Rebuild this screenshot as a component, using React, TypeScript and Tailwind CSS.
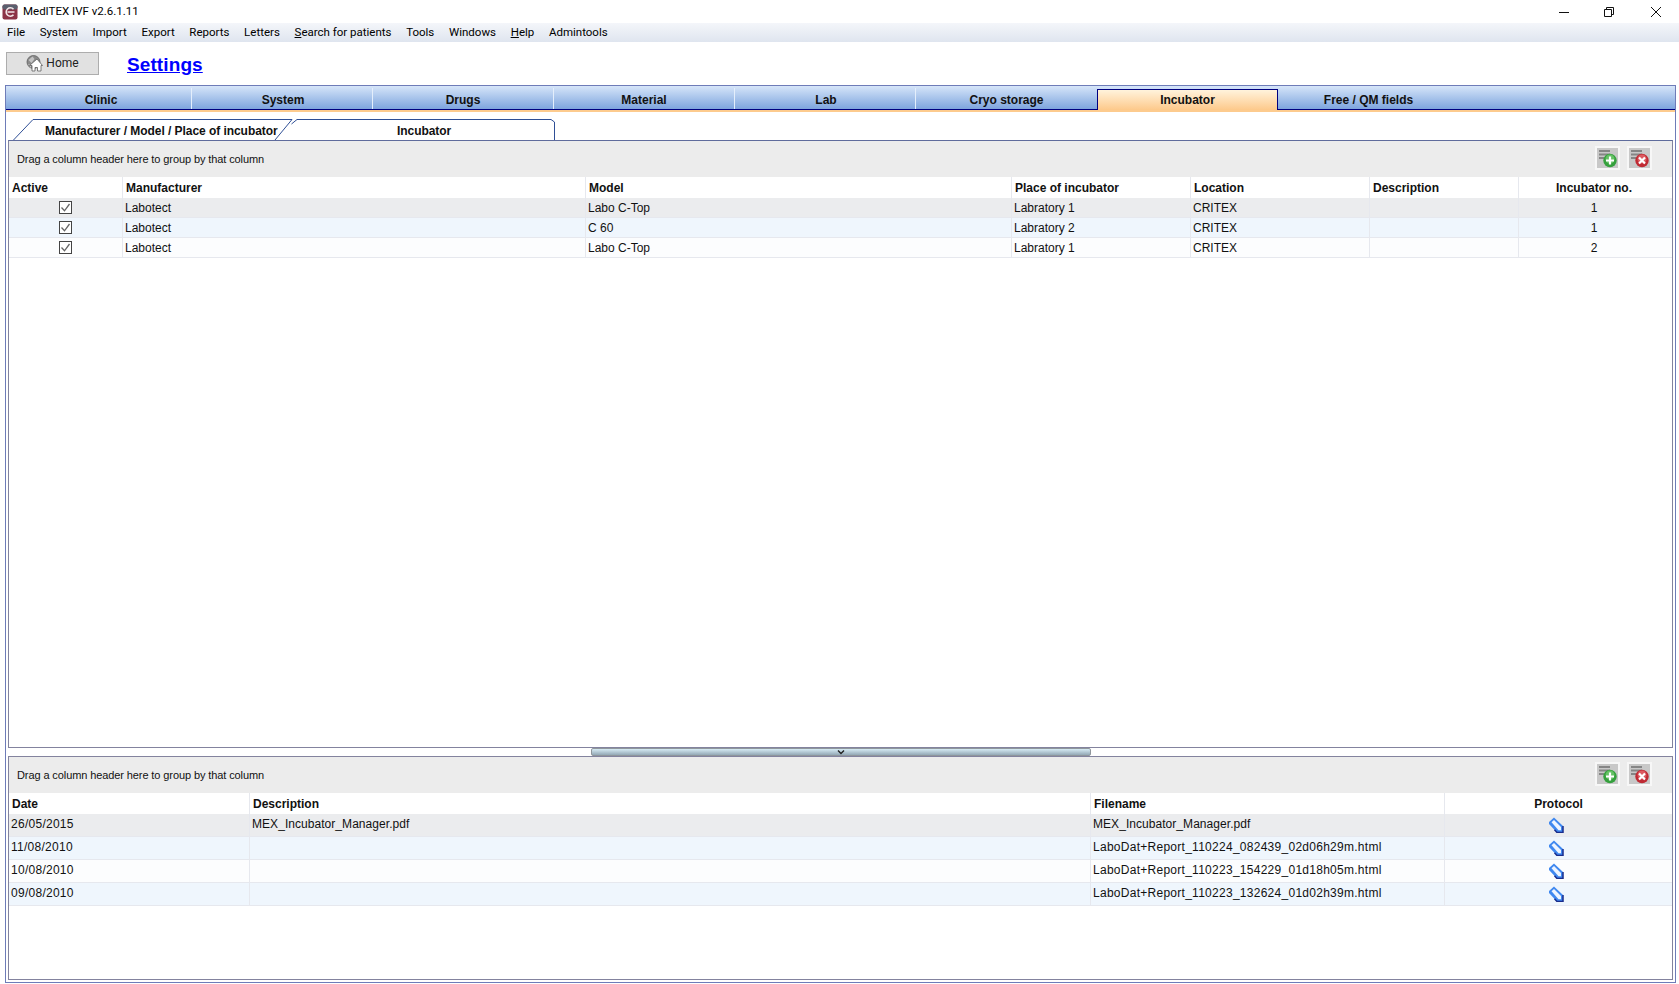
import React from "react";

const uiFont = '"Roboto", "Noto Sans", sans-serif';

const menuItems = ["File", "System", "Import", "Export", "Reports", "Letters", "Search for patients", "Tools", "Windows", "Help", "Admintools"];

const mainTabs = [
  { label: "Clinic", width: "w-[186px] pl-[5px]" },
  { label: "System", width: "w-[181px] pl-[2px]" },
  { label: "Drugs", width: "w-[181px]" },
  { label: "Material", width: "w-[181px]" },
  { label: "Lab", width: "w-[181px] pl-[2px]" },
  { label: "Cryo storage", width: "w-[181px]" },
  { label: "Incubator", width: "w-[181px]", active: true },
  { label: "Free / QM fields", width: "w-[181px]" },
];

const incubators = [
  ["Labotect", "Labo C-Top", "Labratory 1", "CRITEX", "", "1"],
  ["Labotect", "C 60", "Labratory 2", "CRITEX", "", "1"],
  ["Labotect", "Labo C-Top", "Labratory 1", "CRITEX", "", "2"],
];

const protocols = [
  ["26/05/2015", "MEX_Incubator_Manager.pdf", "MEX_Incubator_Manager.pdf"],
  ["11/08/2010", "", "LaboDat+Report_110224_082439_02d06h29m.html"],
  ["10/08/2010", "", "LaboDat+Report_110223_154229_01d18h05m.html"],
  ["09/08/2010", "", "LaboDat+Report_110223_132624_01d02h39m.html"],
];

const rowBg = ["bg-[#ebecee]", "bg-[#eff6fd]", "bg-[#fcfdfe]", "bg-[#eff6fd]"];

const AppLogo = () => (
  <svg width="16" height="16" viewBox="0 0 16 16" className="shrink-0">
    <rect x="0.5" y="0.5" width="15" height="15" rx="2" fill="#8c3346" />
    <rect x="0.5" y="0.5" width="15" height="5" rx="2" fill="#5a5f6e" />
    <path d="M11.5 5.2 A4.2 4.2 0 1 0 11.5 10.8" fill="none" stroke="#f2e6e8" strokeWidth="1.6" />
    <path d="M5.5 8 H12.5" stroke="#f2e6e8" strokeWidth="1.5" />
  </svg>
);

const HomeIcon = () => (
  <svg width="17" height="17" viewBox="0 0 17 17" className="shrink-0">
    <circle cx="7.5" cy="7" r="6.5" fill="#8a8a8a" stroke="#5f5f5f" strokeWidth="0.8" />
    <path d="M2.5 5 L6.5 1.5 L8.5 4 L5.5 8 Z M2 9 L5 10 L5 13 Z" fill="#c4c4c4" />
    <path d="M6 16 L6 10.5 L3.5 10.5 L11 4 L16.5 10.5 L15 10.5 L15 16 L11.5 16 L11.5 12.5 L9 12.5 L9 16 Z" fill="#ffffff" stroke="#5f5f5f" strokeWidth="0.8" />
  </svg>
);

const ActionButton = ({ kind }: { kind: "add" | "remove" }) => (
  <div className="w-[25px] h-[24px] bg-[#c8c8c8] border-2 border-[#f7f7f7] flex items-start justify-start">
    <svg width="21" height="20" viewBox="0 0 21 20">
      <path d="M2 3 H13 M2 6.5 H13 M2 10 H7" stroke="#858585" strokeWidth="2" />
      {kind === "add" ? (
        <>
          <circle cx="13" cy="12.5" r="6.7" fill="#35a03d" />
          <circle cx="13" cy="11" r="4.5" fill="#65c265" />
          <path d="M13 8.5 V16.5 M9 12.5 H17" stroke="#ffffff" strokeWidth="2.2" />
        </>
      ) : (
        <>
          <circle cx="13" cy="12.5" r="6.7" fill="#bf2a33" />
          <circle cx="13" cy="11" r="4.5" fill="#dc5a60" />
          <path d="M10 9.5 L16 15.5 M16 9.5 L10 15.5" stroke="#ffffff" strokeWidth="2.2" />
        </>
      )}
    </svg>
  </div>
);

const ProtocolIcon = () => (
  <svg width="16" height="16" viewBox="0 0 16 16">
    <path d="M6 0.5 L1 5 L1 7 L9 15.5 L15 15.5 L15 9 Z" fill="#3f88f0" />
    <path d="M6 3 L3.5 5.2 L10.5 13.2 L13 13.2 L13 10 Z" fill="#edf4ff" />
    <path d="M15 9 L15 15.5 L9 15.5 L6.5 12.8" fill="none" stroke="#1a2c8c" strokeWidth="1.5" />
  </svg>
);

const GroupBar = () => (
  <div className="h-[36px] shrink-0 bg-[#ececec] flex items-center justify-between pl-[8px] pr-[20px]">
    <span className="text-[11px] text-[#111] tracking-[-0.1px]">Drag a column header here to group by that column</span>
    <div className="flex items-center gap-[7px] -mt-[2px]">
      <ActionButton kind="add" />
      <ActionButton kind="remove" />
    </div>
  </div>
);

const Checkbox = () => (
  <svg width="13" height="13" viewBox="0 0 13 13">
    <rect x="0.5" y="0.5" width="12" height="12" fill="#ffffff" stroke="#444444" />
    <path d="M2.5 6.5 L5.5 9.8 L10.5 3" fill="none" stroke="#666666" strokeWidth="1.3" />
  </svg>
);

const SubTab = ({ path, label, width, textClass }: { path: string; label: string; width: string; textClass: string }) => (
  <div className={`relative h-[21px] ${width}`}>
    <svg className="absolute inset-0 w-full h-full" preserveAspectRatio="none">
      <path d={path} fill="#ffffff" stroke="#2f4f96" strokeWidth="1" />
    </svg>
    <span className={`absolute top-[3px] text-[12px] font-bold text-[#111] tracking-[-0.05px] ${textClass}`}>{label}</span>
  </div>
);

export default function App() {
  return (
    <div
      className="w-[1679px] h-[984px] overflow-hidden bg-white flex flex-col text-[12px] text-[#111]"
      style={{ fontFamily: '"Liberation Sans", Arial, sans-serif' }}
    >
      {/* Title bar */}
      <div className="h-[23px] shrink-0 flex items-center justify-between pl-[2px]">
        <div className="flex items-center gap-[5px]" style={{ fontFamily: uiFont }}>
          <AppLogo />
          <span className="text-[11.5px] text-black">MedITEX IVF v2.6.1.11</span>
        </div>
        <div className="flex items-center pr-[18px]">
          <svg width="10" height="10" viewBox="0 0 10 10"><path d="M0 5.5 H10" stroke="#111" /></svg>
          <svg width="10" height="10" viewBox="0 0 10 10" className="ml-[35px]"><path d="M0.5 2.5 H7.5 V9.5 H0.5 Z M2.5 2.5 V0.5 H9.5 V7.5 H7.5" fill="none" stroke="#111" /></svg>
          <svg width="10" height="10" viewBox="0 0 10 10" className="ml-[37px]"><path d="M0 0 L10 10 M10 0 L0 10" stroke="#111" /></svg>
        </div>
      </div>

      {/* Menu */}
      <div
        className="h-[19px] shrink-0 flex items-center gap-[14.7px] pl-[7px] bg-gradient-to-b from-[#f4f6fa] to-[#dfe5ef] text-[11.5px] text-black"
        style={{ fontFamily: uiFont }}
      >
        {menuItems.map((item) =>
          item === "Search for patients" ? (
            <span key={item}><span className="underline">S</span>earch for patients</span>
          ) : item === "Help" ? (
            <span key={item}><span className="underline">H</span>elp</span>
          ) : (
            <span key={item}>{item}</span>
          )
        )}
      </div>

      {/* Home row */}
      <div className="h-[43px] shrink-0 flex items-center pl-[6px] pb-[1px]">
        <button className="w-[93px] h-[23px] bg-[#e1e1e1] border border-[#adadad] flex items-center justify-center gap-[3px] text-[12px] text-[#222]" style={{ fontFamily: uiFont }}>
          <HomeIcon />
          Home
        </button>
        <a className="ml-[28px] mt-[2px] text-[19px] font-bold text-[#0000ff] underline leading-none tracking-[0.1px]">Settings</a>
      </div>

      {/* Main panel */}
      <div className="flex-1 min-h-0 mx-[5px] mr-[3px] mb-px border border-[#6e7cb8] flex flex-col">
        <div className="h-[24px] shrink-0 flex items-end bg-gradient-to-b from-[#d6e5f9] to-[#7ea5dd] border-b border-[#00007f]">
          {mainTabs.map((tab, i) =>
            tab.active ? (
              <div
                key={tab.label}
                className={`${tab.width} h-[21px] -mb-px bg-gradient-to-b from-[#fff3dc] to-[#fdc98a] border-x border-t border-[#00007f] flex items-center justify-center font-bold text-[#111]`}
              >
                {tab.label}
              </div>
            ) : (
              <div
                key={tab.label}
                className={`${tab.width} h-[21px] pt-[2px] flex items-center justify-center font-bold text-[#111] ${i < 5 ? "border-r border-[#e4eefb]" : ""}`}
              >
                {tab.label}
              </div>
            )
          )}
        </div>
        <div className="h-[2px] shrink-0 bg-[#fdcb8e]" />

        <div className="flex-1 min-h-0 flex flex-col px-[2px] pb-[2px] pt-[7px]">
          {/* Sub tabs */}
          <div className="h-[21px] shrink-0 flex flex-row-reverse justify-end pl-[5px]">
            <SubTab
              width="w-[264px] -ml-[7px]"
              path="M0.5 5 L6 0.5 L260 0.5 L263.5 3 L263.5 21"
              label="Incubator"
              textClass="left-[106px]"
            />
            <SubTab
              width="w-[285px]"
              path="M0.5 21 L20 0.5 L279 0.5 L262 21"
              label="Manufacturer / Model / Place of incubator"
              textClass="left-[32px]"
            />
          </div>

          {/* Incubator grid */}
          <div className="flex-1 min-h-0 border border-[#83839e] border-t-[#5f6c9c] flex flex-col">
            <GroupBar />
            <div className="grid grid-cols-[114px_463px_426px_179px_179px_149px_1fr] h-[21px] shrink-0 font-bold bg-white">
              {["Active", "Manufacturer", "Model", "Place of incubator", "Location", "Description"].map((h) => (
                <div key={h} className="border-r border-[#e6e8ee] pl-[3px] flex items-center">{h}</div>
              ))}
              <div className="flex items-center justify-center pr-[3px]">Incubator no.</div>
            </div>
            {incubators.map((row, r) => (
              <div key={r} className={`grid grid-cols-[114px_463px_426px_179px_179px_149px_1fr] h-[20px] shrink-0 border-b border-[#e6e8ee] ${rowBg[r]}`}>
                <div className="border-r border-[#e6e8ee] flex items-center justify-center"><Checkbox /></div>
                {row.slice(0, 5).map((cell, c) => (
                  <div key={c} className="border-r border-[#e6e8ee] pl-[2px] flex items-center">{cell}</div>
                ))}
                <div className="flex items-center justify-center pr-[3px]">{row[5]}</div>
              </div>
            ))}
          </div>

          {/* Splitter */}
          <div className="h-[8px] shrink-0 flex justify-center">
            <div className="w-[500px] h-[8px] border border-[#8f969c] rounded-[2px] bg-gradient-to-b from-[#d7ecf5] to-[#93a8b5] flex items-center justify-center">
              <svg width="8" height="5" viewBox="0 0 8 5"><path d="M1 0.5 L4 3.5 L7 0.5" fill="none" stroke="#222" strokeWidth="1.4" /></svg>
            </div>
          </div>

          {/* Protocol grid */}
          <div className="h-[224px] shrink-0 border border-[#83839e] flex flex-col">
            <GroupBar />
            <div className="grid grid-cols-[241px_841px_354px_1fr] h-[21px] shrink-0 font-bold bg-white">
              {["Date", "Description", "Filename"].map((h) => (
                <div key={h} className="border-r border-[#e6e8ee] pl-[3px] flex items-center">{h}</div>
              ))}
              <div className="flex items-center justify-center">Protocol</div>
            </div>
            {protocols.map((row, r) => (
              <div key={r} className={`grid grid-cols-[241px_841px_354px_1fr] h-[23px] shrink-0 border-b border-[#e6e8ee] ${rowBg[r]}`}>
                {row.map((cell, c) => (
                  <div key={c} className={`border-r border-[#e6e8ee] pl-[2px] flex items-center pb-[3px] ${/\d{2}/.test(cell) ? "tracking-[0.27px]" : "tracking-[0.05px]"}`}>{cell}</div>
                ))}
                <div className="flex items-center justify-center pr-[6px]"><ProtocolIcon /></div>
              </div>
            ))}
          </div>
        </div>
      </div>
    </div>
  );
}
